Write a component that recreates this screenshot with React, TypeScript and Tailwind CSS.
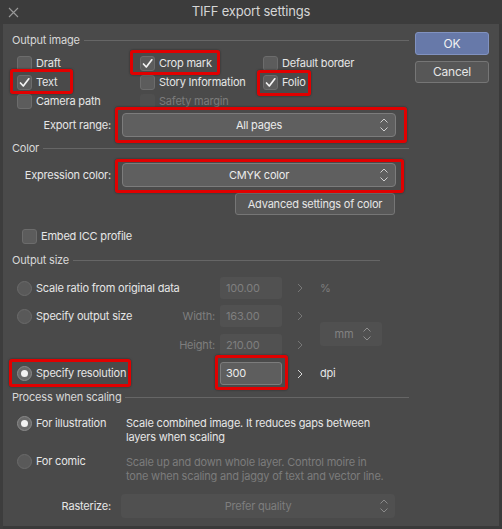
import React from "react";

const Check = () => (
  <svg width="13" height="13" viewBox="0 0 13 13">
    <polyline points="2.5,7 5.3,10 10.8,2.8" fill="none" stroke="#f4f4f4" strokeWidth="1.7" strokeLinecap="round" strokeLinejoin="round" />
  </svg>
);

const Chevrons = ({ color = "#d0d0d0" }: { color?: string }) => (
  <svg width="10" height="16" viewBox="0 0 10 16">
    <path d="M1.5 5.5 L5 2 L8.5 5.5" fill="none" stroke={color} strokeWidth="1" />
    <path d="M1.5 10.5 L5 14 L8.5 10.5" fill="none" stroke={color} strokeWidth="1" />
  </svg>
);

const Arrow = ({ color }: { color: string }) => (
  <svg width="6" height="10" viewBox="0 0 6 10">
    <path d="M1 1 L5 5 L1 9" fill="none" stroke={color} strokeWidth="1" />
  </svg>
);

function CheckBox({ label, checked, disabled }: { label: string; checked?: boolean; disabled?: boolean }) {
  return (
    <div className="flex items-center gap-[4px] h-[19px]">
      <span
        className={
          disabled
            ? "w-[15px] h-[15px] rounded-[3px] bg-[#4f4f4f] flex items-center justify-center"
            : "w-[15px] h-[15px] rounded-[3px] bg-[#5c5c5c] border border-[#6c6c6c] flex items-center justify-center"
        }
      >
        {checked && <Check />}
      </span>
      <span className={disabled ? "text-[11px] text-[#7b7b7b]" : "text-[11px] text-[#e6e6e6]"}>{label}</span>
    </div>
  );
}

function Radio({ label, selected }: { label: string; selected?: boolean }) {
  return (
    <div className="flex items-center gap-[4px]">
      <span
        className={
          selected
            ? "w-[15px] h-[15px] rounded-full bg-[#6a6a6a] border border-[#8a8a8a] flex items-center justify-center"
            : "w-[15px] h-[15px] rounded-full bg-[#595959] border border-[#6a6a6a]"
        }
      >
        {selected && <span className="w-[7px] h-[7px] rounded-full bg-[#f2f2f2]" />}
      </span>
      <span className="text-[11px] text-[#e6e6e6] whitespace-nowrap">{label}</span>
    </div>
  );
}

function Header({ label, lineEnd = 409 }: { label: string; lineEnd?: number }) {
  return (
    <div className="flex items-center h-[16px] pl-[12px]" style={{ width: lineEnd }}>
      <span className="text-[11px] text-[#d8d8d8] whitespace-nowrap">{label}</span>
      <div className="flex-1 h-px bg-[#666666] ml-[4px]" />
    </div>
  );
}

function Select({ label, w, disabled }: { label: string; w: number; disabled?: boolean }) {
  return (
    <div
      className={
        disabled
          ? "h-[24px] rounded-[4px] bg-[#505050] grid grid-cols-[22px_1fr_22px] items-center"
          : "h-[24px] rounded-[4px] bg-[#5f5f5f] border border-[#7c7c7c] grid grid-cols-[22px_1fr_22px] items-center"
      }
      style={{ width: w }}
    >
      <span />
      <span className={disabled ? "text-center text-[11px] text-[#7e7e7e]" : "text-center text-[11px] text-[#ececec]"}>
        {label}
      </span>
      <span className="flex items-center justify-center">
        <Chevrons color={disabled ? "#8a8a8a" : "#d0d0d0"} />
      </span>
    </div>
  );
}

function Input({ value, active }: { value: string; active?: boolean }) {
  return (
    <div
      className={
        active
          ? "w-[62px] h-[23px] rounded-[3px] bg-[#5e5e5e] border border-[#7c7c7c] flex items-center pl-[5px] text-[11px] text-[#ececec]"
          : "w-[62px] h-[22px] rounded-[3px] bg-[#515151] flex items-center pl-[6px] text-[11px] text-[#7f7f7f]"
      }
    >
      {value}
    </div>
  );
}

const RED = [
  { l: 130, t: 50, w: 90, h: 25 },
  { l: 10, t: 69, w: 63, h: 25 },
  { l: 257, t: 70, w: 54, h: 26 },
  { l: 115, t: 107, w: 292, h: 36 },
  { l: 115, t: 159, w: 289, h: 34 },
  { l: 9, t: 359, w: 122, h: 28 },
  { l: 215, t: 355, w: 73, h: 35 },
];

export default function App() {
  return (
    <div className="relative w-[502px] h-[529px] bg-[#4a4a4a] font-['Inter','Noto_Sans',sans-serif] tracking-[-0.2px] overflow-hidden select-none">
      {/* title bar */}
      <div className="h-[24px] bg-[#3c3c3c] grid grid-cols-[24px_1fr_24px] items-center">
        <span className="flex items-center justify-center pl-[2px]">
          <svg width="11" height="11" viewBox="0 0 11 11">
            <path d="M1 1 L10 10 M10 1 L1 10" stroke="#9a9a9a" strokeWidth="1.1" />
          </svg>
        </span>
        <span className="text-center text-[13px] text-[#d6d6d6]">TIFF export settings</span>
        <span />
      </div>

      {/* body */}
      <div className="h-[505px] flex shadow-[inset_3px_0_0_#3d3d3d,inset_-3px_-3px_0_#3a3a3a]">
        {/* left panel */}
        <div className="w-[409px] flex flex-col">
          <div className="mt-[8px]">
            <Header label="Output image" />
          </div>
          <div className="mt-[6px] pl-[17px] grid grid-cols-[123px_123px_auto]">
            <CheckBox label="Draft" />
            <CheckBox label="Crop mark" checked />
            <CheckBox label="Default border" />
            <CheckBox label="Text" checked />
            <CheckBox label="Story Information" />
            <CheckBox label="Folio" checked />
            <CheckBox label="Camera path" />
            <CheckBox label="Safety margin" disabled />
          </div>
          <div className="mt-[2px] flex items-center h-[24px]">
            <span className="w-[111px] text-right text-[11px] text-[#e6e6e6]">Export range:</span>
            <div className="ml-[11px]">
              <Select label="All pages" w={274} />
            </div>
          </div>

          <div className="mt-[3px]">
            <Header label="Color" />
          </div>
          <div className="mt-[7px] flex items-center h-[24px]">
            <span className="w-[111px] text-right text-[11px] text-[#e6e6e6]">Expression color:</span>
            <div className="ml-[11px]">
              <Select label="CMYK color" w={274} />
            </div>
          </div>
          <div className="mt-[6px] ml-[235px] w-[160px] h-[22px] rounded-[3px] bg-[#585858] border border-[#767676] flex items-center justify-center text-[11px] text-[#e6e6e6]">
            Advanced settings of color
          </div>
          <div className="mt-[12px] pl-[22px]">
            <CheckBox label="Embed ICC profile" />
          </div>

          <div className="mt-[6px]">
            <Header label="Output size" lineEnd={380} />
          </div>
          <div className="mt-[9px] pl-[17px] flex items-center h-[22px]">
            <div className="w-[203px]">
              <Radio label="Scale ratio from original data" />
            </div>
            <Input value="100.00" />
            <span className="w-[38px] flex justify-center pr-[3px]">
              <Arrow color="#777777" />
            </span>
            <span className="text-[11px] text-[#7e7e7e]">%</span>
          </div>
          <div className="flex items-center">
            <div className="flex flex-col">
              <div className="mt-[6px] pl-[17px] flex items-center h-[22px]">
                <div className="w-[203px] flex items-center">
                  <Radio label="Specify output size" />
                  <span className="flex-1 text-right pr-[5px] text-[11px] text-[#7e7e7e]">Width:</span>
                </div>
                <Input value="163.00" />
                <span className="w-[38px] flex justify-center pr-[3px]">
                  <Arrow color="#777777" />
                </span>
              </div>
              <div className="mt-[7px] pl-[17px] flex items-center h-[22px]">
                <div className="w-[203px] text-right pr-[5px] text-[11px] text-[#7e7e7e]">Height:</div>
                <Input value="210.00" />
                <span className="w-[38px] flex justify-center pr-[3px]">
                  <Arrow color="#777777" />
                </span>
              </div>
            </div>
            <div className="mt-[13px] w-[62px] h-[24px] rounded-[3px] bg-[#505050] grid grid-cols-[1fr_20px] items-center">
              <span className="text-center text-[11px] text-[#828282] pl-[6px]">mm</span>
              <span className="flex items-center">
                <Chevrons color="#8e8e8e" />
              </span>
            </div>
          </div>
          <div className="mt-[6px] pl-[17px] flex items-center h-[23px]">
            <div className="w-[203px]">
              <Radio label="Specify resolution" selected />
            </div>
            <Input value="300" active />
            <span className="w-[38px] flex justify-center pr-[3px]">
              <Arrow color="#d8d8d8" />
            </span>
            <span className="text-[11px] text-[#e6e6e6]">dpi</span>
          </div>

          <div className="mt-[4px]">
            <Header label="Process when scaling" />
          </div>
          <div className="mt-[11px] pl-[17px] flex items-start">
            <div className="w-[109px] h-[14px] flex items-center">
              <Radio label="For illustration" selected />
            </div>
            <div className="text-[11px] leading-[14px] text-[#e6e6e6] whitespace-nowrap">
              Scale combined image. It reduces gaps between
              <br />
              layers when scaling
            </div>
          </div>
          <div className="mt-[10px] pl-[17px] flex items-start">
            <div className="w-[109px] h-[14px] flex items-center">
              <Radio label="For comic" />
            </div>
            <div className="text-[11px] leading-[14px] text-[#7c7c7c] whitespace-nowrap pt-[1px]">
              Scale up and down whole layer. Control moire in
              <br />
              tone when scaling and jaggy of text and vector line.
            </div>
          </div>
          <div className="mt-[11px] flex items-center h-[24px]">
            <span className="w-[111px] text-right text-[11px] text-[#e6e6e6]">Rasterize:</span>
            <div className="ml-[10px]">
              <Select label="Prefer quality" w={274} disabled />
            </div>
          </div>
        </div>

        {/* right buttons */}
        <div className="ml-[6px] mt-[8px] w-[74px] flex flex-col">
          <div className="h-[23px] rounded-[3px] bg-[#6779a9] border border-[#8192c0] flex items-center justify-center text-[12px] text-[#f2f2f2]">
            OK
          </div>
          <div className="mt-[6px] h-[22px] rounded-[3px] bg-[#575757] border border-[#767676] flex items-center justify-center text-[12px] text-[#e6e6e6]">
            Cancel
          </div>
        </div>
      </div>

      {/* annotation overlays */}
      {RED.map((r, i) => (
        <div
          key={i}
          className="absolute border-[3px] border-[#e10000] rounded-[3px] pointer-events-none shadow-[0_0_2px_rgba(0,0,0,0.5)]"
          style={{ left: r.l, top: r.t, width: r.w, height: r.h }}
        />
      ))}
    </div>
  );
}
